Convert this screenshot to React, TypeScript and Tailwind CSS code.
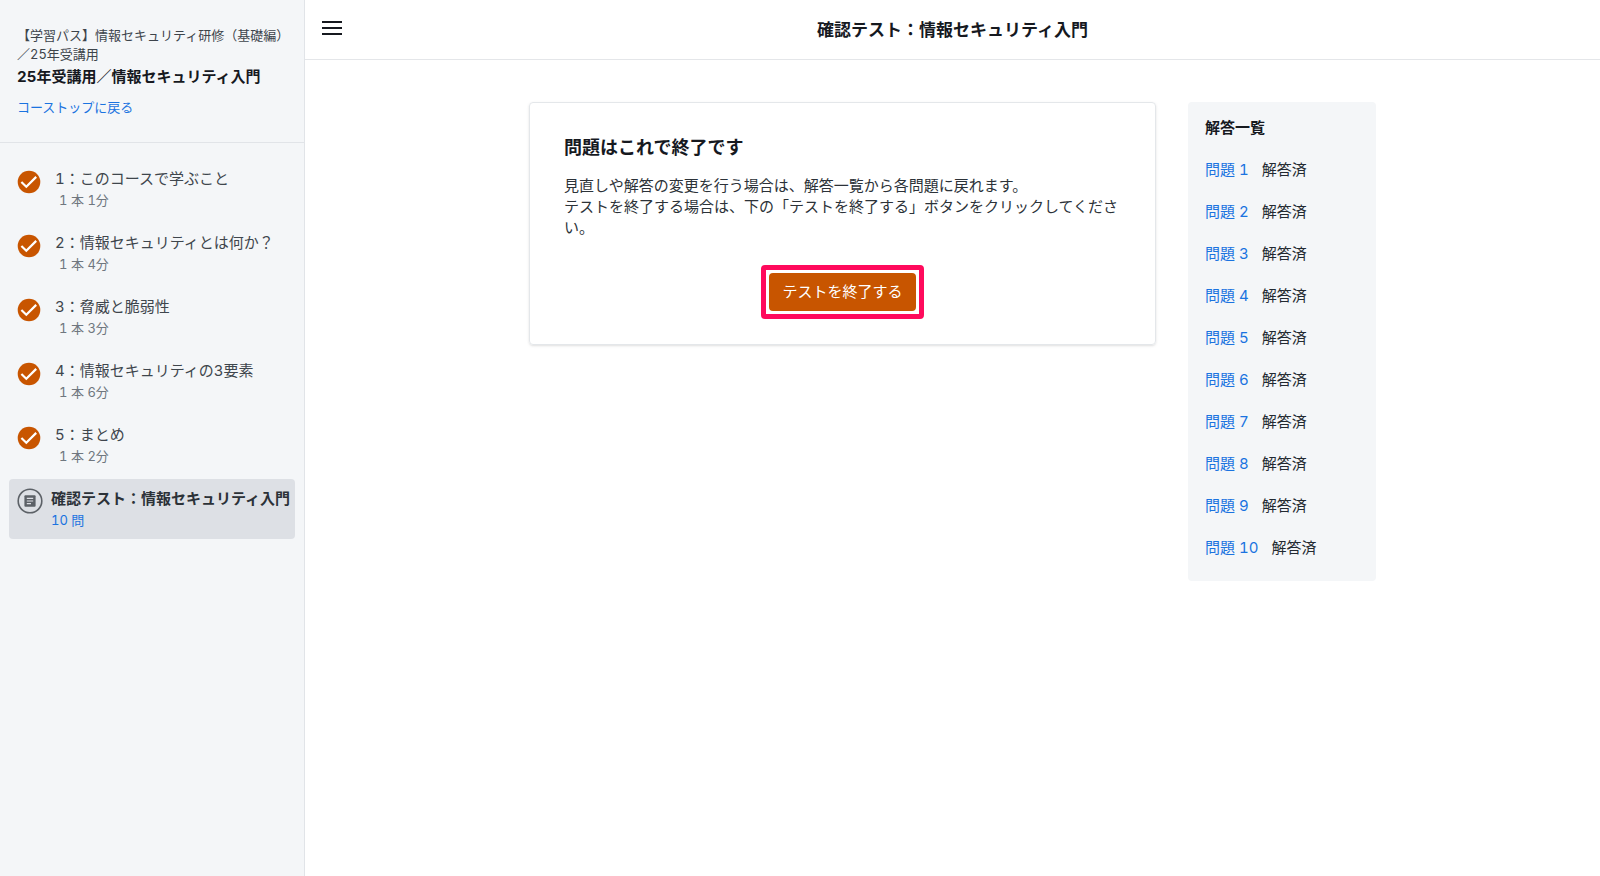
const lessons = [
  { title: "1：このコースで学ぶこと", detail: "1 本 1分" },
  { title: "2：情報セキュリティとは何か？", detail: "1 本 4分" },
  { title: "3：脅威と脆弱性", detail: "1 本 3分" },
  { title: "4：情報セキュリティの3要素", detail: "1 本 6分" },
  { title: "5：まとめ", detail: "1 本 2分" },
];

const questions = Array.from({ length: 10 }, (_, i) => i + 1);

function CheckIcon() {
  return (
    <svg viewBox="0 0 24 24" className="size-6 shrink-0" aria-hidden="true">
      <circle cx="12" cy="12" r="11.3" fill="#c85500" />
      <path d="M4.4 12l4.9 4.8 9.9-9.9" fill="none" stroke="#fff" strokeWidth="2.2" />
    </svg>
  );
}

function QuizIcon() {
  return (
    <svg viewBox="0 0 26 26" className="size-[26px] shrink-0" aria-hidden="true">
      <circle cx="13" cy="13" r="11.8" fill="none" stroke="#5c6167" strokeWidth="1.6" />
      <rect x="7.4" y="7.2" width="11.2" height="11.6" rx="1" fill="#5c6167" />
      <path d="M9.8 10.3h6.4M9.8 13h6.4M9.8 15.7h4.2" stroke="#dde0e5" strokeWidth="1.2" />
    </svg>
  );
}

function Sidebar() {
  return (
    <aside className="w-[305px] shrink-0 border-r border-[#e1e4e8] bg-[#f4f6f8]">
      <div className="border-b border-[#e1e4e8] pt-[26px] pr-2 pb-[25px] pl-[17px]">
        <p className="text-[13px] leading-[19px] text-[#3d444b]">
          【学習パス】情報セキュリティ研修（基礎編）
          <br />
          ／25年受講用
        </p>
        <h2 className="mt-0.5 text-[15px] leading-[22px] font-bold text-[#16191f]">
          25年受講用／情報セキュリティ入門
        </h2>
        <a href="#course" className="mt-2.5 block text-[13px] leading-[19px] text-[#1a73e0]">
          コーストップに戻る
        </a>
      </div>

      <nav className="px-[9px] pt-4">
        <ul className="space-y-1">
          {lessons.map((lesson) => (
            <li key={lesson.title}>
              <a href="#lesson" className="flex gap-3 rounded px-2 py-[9px]">
                <span className="pt-0.5">
                  <CheckIcon />
                </span>
                <span className="pl-0.5">
                  <span className="block text-[15px] leading-[22px] text-[#3f464d]">
                    {lesson.title}
                  </span>
                  <span className="block pl-1 text-[13px] leading-5 text-[#6f777f]">
                    {lesson.detail}
                  </span>
                </span>
              </a>
            </li>
          ))}
          <li>
            <a
              href="#quiz"
              aria-current="page"
              className="flex items-start gap-2 rounded bg-[#dde0e5] py-[9px] pl-2"
            >
              <QuizIcon />
              <span className="whitespace-nowrap">
                <span className="block text-[15px] leading-[22px] font-bold text-[#2c3238]">
                  確認テスト：情報セキュリティ入門
                </span>
                <span className="block text-[13px] leading-5 text-[#1a73e0]">10 問</span>
              </span>
            </a>
          </li>
        </ul>
      </nav>
    </aside>
  );
}

function Header() {
  return (
    <header className="grid h-[60px] grid-cols-[56px_1fr_56px] items-center border-b border-[#e4e6e9]">
      <button type="button" aria-label="メニュー" className="mb-1 pl-[17px]">
        <svg viewBox="0 0 20 14" className="h-3.5 w-5" aria-hidden="true">
          <path d="M0 1h20M0 7h20M0 13h20" stroke="#16191f" strokeWidth="2" />
        </svg>
      </button>
      <h1 className="text-center text-[17px] leading-6 font-bold text-[#16191f]">
        確認テスト：情報セキュリティ入門
      </h1>
    </header>
  );
}

function AnswerList() {
  return (
    <section className="w-[188px] shrink-0 rounded bg-[#f4f6f8] px-[17px] pt-[15px] pb-3">
      <h2 className="text-[15px] leading-[22px] font-bold text-[#16191f]">解答一覧</h2>
      <ul className="pt-2.5">
        {questions.map((n) => (
          <li key={n} className="flex gap-[13px] text-[15px] leading-[42px] text-[#232a31]">
            <a href="#question" className="text-[#1a73e0]">
              問題 {n}
            </a>
            <span>解答済</span>
          </li>
        ))}
      </ul>
    </section>
  );
}

export default function App() {
  return (
    <div
      lang="ja"
      className="flex min-h-screen bg-white font-['Inter','Noto_Sans_CJK_JP',sans-serif] tabular-nums"
    >
      <Sidebar />
      <div className="min-w-0 flex-1">
        <Header />
        <main className="mx-auto flex max-w-[847px] items-start gap-8 pt-[42px]">
          <section className="flex-1 rounded border border-[#e4e7ea] px-[34px] pt-[33px] pb-[25px] shadow-sm">
            <h2 className="text-lg leading-6 font-bold text-[#16191f]">問題はこれで終了です</h2>
            <p className="mt-[15px] text-[15px] leading-[21px] text-[#2c3238]">
              見直しや解答の変更を行う場合は、解答一覧から各問題に戻れます。
              <br />
              テストを終了する場合は、下の「テストを終了する」ボタンをクリックしてください。
            </p>
            <div className="mt-[27px] flex justify-center">
              <div className="rounded border-5 border-[#ff0a5c] p-[3px]">
                <button
                  type="button"
                  className="block rounded bg-[#c85500] px-[13px] py-2 text-[15px] leading-[22px] text-white"
                >
                  テストを終了する
                </button>
              </div>
            </div>
          </section>
          <AnswerList />
        </main>
      </div>
    </div>
  );
}
